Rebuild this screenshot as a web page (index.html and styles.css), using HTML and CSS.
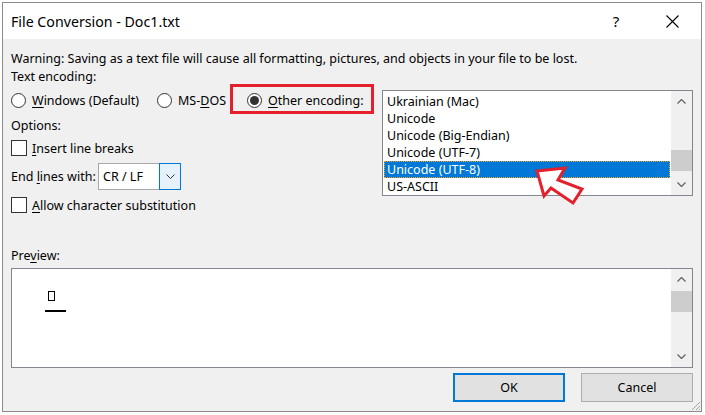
FILE: index.html
```
<!DOCTYPE html>
<html>
<head>
<meta charset="utf-8">
<link rel="stylesheet" href="styles.css">
</head>
<body>
<div class="window">
  <div class="titlebar">
    <span class="title">File Conversion - Doc1.txt</span>
    <span class="tb-btn help">?</span>
    <span class="tb-btn close"><svg width="13" height="13" viewBox="0 0 13 13"><path d="M0.5 0.5 L12.5 12.5 M12.5 0.5 L0.5 12.5" stroke="#000" stroke-width="1.1" fill="none"/></svg></span>
  </div>
  <div class="content">
    <div class="line">Warning: Saving as a text file will cause all formatting, pictures, and objects in your file to be lost.</div>
    <div class="main">
      <div class="left">
        <div class="line enc-label">Text encoding:</div>
        <div class="radios">
          <label class="radio r1"><span class="rb"></span><span><u>W</u>indows (Default)</span></label>
          <label class="radio r2"><span class="rb"></span><span>MS-<u>D</u>OS</span></label>
          <label class="radio hl"><span class="rb on"></span><span><u>O</u>ther encoding:</span></label>
        </div>
        <div class="line options">Options:</div>
        <label class="check c1"><span class="cb"></span><span><u>I</u>nsert line breaks</span></label>
        <div class="endlines">
          <span class="endlabel">End <u>l</u>ines with:</span>
          <div class="combo">
            <span class="combo-val">CR / LF</span>
            <span class="combo-btn"><svg width="9" height="5" viewBox="0 0 9 5"><path d="M0.5 0.5 L4.5 4.5 L8.5 0.5" stroke="#333" stroke-width="1" fill="none"/></svg></span>
          </div>
        </div>
        <label class="check c2"><span class="cb"></span><span><u>A</u>llow character substitution</span></label>
      </div>
      <div class="listbox">
        <ul class="items">
          <li>Ukrainian (Mac)</li>
          <li>Unicode</li>
          <li>Unicode (Big-Endian)</li>
          <li>Unicode (UTF-7)</li>
          <li class="sel">Unicode (UTF-8)</li>
          <li>US-ASCII</li>
        </ul>
        <div class="scrollbar">
          <span class="sb-btn"><svg width="9" height="5" viewBox="0 0 9 5"><path d="M0.5 4.5 L4.5 0.5 L8.5 4.5" stroke="#606060" stroke-width="1.2" fill="none"/></svg></span>
          <span class="sb-track"><span class="thumb list-thumb"></span></span>
          <span class="sb-btn"><svg width="9" height="5" viewBox="0 0 9 5"><path d="M0.5 0.5 L4.5 4.5 L8.5 0.5" stroke="#606060" stroke-width="1.2" fill="none"/></svg></span>
        </div>
        <svg class="callout" width="66" height="50" viewBox="525 160 66 50">
          <polygon points="536,171 564,168 557,180 581,189 572,203 550,188 543,196" fill="#fff" stroke="#e3202b" stroke-width="3" stroke-linejoin="miter"/>
        </svg>
      </div>
    </div>
    <div class="line preview-label">Pre<u>v</u>iew:</div>
    <div class="preview">
      <div class="preview-body">
        <span class="tofu"></span>
        <span class="para-bar"></span>
      </div>
      <div class="scrollbar">
        <span class="sb-btn"><svg width="9" height="5" viewBox="0 0 9 5"><path d="M0.5 4.5 L4.5 0.5 L8.5 4.5" stroke="#606060" stroke-width="1.2" fill="none"/></svg></span>
        <span class="sb-track"><span class="thumb prev-thumb"></span></span>
        <span class="sb-btn"><svg width="9" height="5" viewBox="0 0 9 5"><path d="M0.5 0.5 L4.5 4.5 L8.5 0.5" stroke="#606060" stroke-width="1.2" fill="none"/></svg></span>
      </div>
    </div>
    <div class="buttons">
      <button class="btn ok">OK</button>
      <button class="btn">Cancel</button>
    </div>
  </div>
  <svg class="grip" width="12" height="12" viewBox="0 0 12 12"><path d="M11 3 L3 11 M11 7 L7 11 M11 10 L10 11" stroke="#a0a0a0" stroke-width="1" fill="none"/></svg>
</div>
</body>
</html>
```
FILE: styles.css
```
* { box-sizing: border-box; }
html, body { margin: 0; padding: 0; }
body {
  background: #fff;
  font-family: "Segoe UI", "Noto Sans", "Open Sans", sans-serif;
  font-size: 12.5px;
  color: #000;
}
u { text-decoration: underline; text-underline-offset: 2px; }

.window {
  margin: 2px 0 0 2px;
  width: 700px;
  height: 410px;
  border: 1px solid #8a8a8a;
  display: flex;
  flex-direction: column;
  position: relative;
  background: #f0f0f0;
}
.titlebar {
  flex: none;
  height: 36px;
  background: #fff;
  display: flex;
  align-items: center;
  padding-left: 8px;
}
.title { flex: 1; font-size: 14.2px; }
.tb-btn {
  width: 46px;
  height: 36px;
  display: flex;
  align-items: center;
  justify-content: center;
}
.help { margin-right: 10px; font-size: 15px; }
.close { margin-right: 6px; }

.content {
  flex: 1;
  padding: 12px 8px 0 8px;
}
.line { height: 16px; line-height: 16px; white-space: nowrap; }

.main { display: flex; margin-top: 2px; }
.left { flex: 1; }
.enc-label { height: 15px; }
.radios { display: flex; height: 30px; }
.radio {
  display: flex;
  align-items: center;
  gap: 6px;
  padding-top: 3px;
  white-space: nowrap;
}
.r1 { width: 146px; }
.r2 { width: 73px; }
.radio.hl {
  border: 3px solid #e3202b;
  padding: 3px 8px 0 14px;
}
.rb {
  flex: none;
  width: 15px;
  height: 15px;
  border: 1px solid #333;
  border-radius: 50%;
  background: #fff;
  display: flex;
  align-items: center;
  justify-content: center;
}
.rb.on::after {
  content: "";
  width: 9px;
  height: 9px;
  border-radius: 50%;
  background: #333;
}
.options { margin-top: 4px; }
.check {
  display: flex;
  align-items: center;
  gap: 5px;
  height: 24px;
  white-space: nowrap;
}
.c1 { margin-top: 2px; }
.c2 { margin-top: 3px; }
.cb {
  flex: none;
  width: 16px;
  height: 16px;
  border: 1px solid #333;
  background: #fff;
}
.endlines {
  display: flex;
  align-items: center;
  height: 27px;
  margin-top: 3px;
}
.endlabel { width: 87px; white-space: nowrap; }
.combo {
  width: 83px;
  height: 27px;
  border: 1px solid #a9a9a9;
  background: #fff;
  display: flex;
}
.combo-val { flex: 1; padding-left: 4px; line-height: 25px; }
.combo-btn {
  width: 22px;
  border: 1px solid #0078d7;
  margin: -1px -1px -1px 0;
  background: #e5f1fb;
  display: flex;
  align-items: center;
  justify-content: center;
}

.listbox {
  flex: none;
  width: 311px;
  height: 106px;
  margin-top: 21px;
  border: 1px solid #828790;
  background: #fff;
  display: flex;
  position: relative;
}
.items {
  list-style: none;
  margin: 0;
  padding: 2px 1px 0 1px;
  flex: 1;
}
.items li {
  height: 17px;
  line-height: 17px;
  padding-left: 3px;
  white-space: nowrap;
}
.items li.sel {
  background: #0078d7;
  color: #fff;
  outline: 1px dotted #f5a02a;
  outline-offset: -1px;
}
.scrollbar {
  width: 21px;
  background: #f0f0f0;
  display: flex;
  flex-direction: column;
}
.sb-btn {
  height: 21px;
  display: flex;
  align-items: center;
  justify-content: center;
  flex: none;
}
.sb-track { flex: 1; display: block; }
.thumb { display: block; height: 21px; background: #cdcdcd; }
.list-thumb { margin-top: 38px; }
.prev-thumb { margin-top: 1px; }
.callout {
  position: absolute;
  left: 143px;
  top: 69px;
}

.preview-label { margin-top: 31px; }
.preview {
  margin-top: 4px;
  height: 100px;
  border: 1px solid #828790;
  background: #fff;
  display: flex;
}
.preview-body {
  flex: 1;
  padding: 22px 0 0 33px;
  display: flex;
  flex-direction: column;
}
.tofu {
  display: block;
  width: 7px;
  height: 10px;
  border: 1px solid #000;
  margin-left: 3px;
}
.para-bar {
  display: block;
  width: 21px;
  height: 2px;
  background: #000;
  margin-top: 9px;
}

.buttons {
  display: flex;
  justify-content: flex-end;
  gap: 16px;
  margin-top: 5px;
}
.btn {
  width: 112px;
  height: 29px;
  background: #e1e1e1;
  border: 1px solid #adadad;
  font: inherit;
  color: #000;
  padding: 0;
}
.btn.ok { border: 2px solid #0078d7; }
.grip {
  position: absolute;
  right: 0;
  bottom: 0;
}
```
